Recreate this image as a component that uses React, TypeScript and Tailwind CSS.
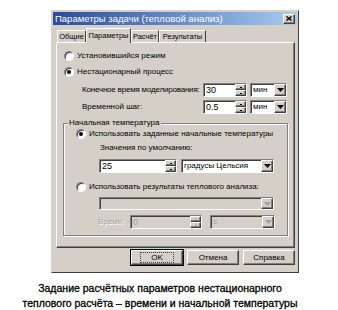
import type { ReactNode } from 'react';

const raised =
  'border border-t-white border-l-white border-r-[#404040] border-b-[#404040] shadow-[inset_-1px_-1px_0_#808080]';
const sunken =
  'border border-t-[#808080] border-l-[#808080] border-r-white border-b-white shadow-[inset_1px_1px_0_#404040]';

function Radio({ checked }: { checked?: boolean }) {
  return (
    <span className={`w-[10px] h-[10px] shrink-0 rounded-full bg-white flex items-center justify-center ${sunken}`}>
      {checked && <span className="w-[4px] h-[4px] rounded-full bg-black" />}
    </span>
  );
}

function Arrow({ disabled }: { disabled?: boolean }) {
  return (
    <svg width="7" height="4" viewBox="0 0 7 4">
      <path d="M0 0h7L3.5 4z" fill={disabled ? '#a0a0a0' : '#000'} />
    </svg>
  );
}

function Spin({ disabled }: { disabled?: boolean }) {
  const tone = disabled ? 'bg-[#a0a0a0]' : 'bg-black';
  return (
    <div className="flex flex-col w-[11px] h-full">
      <div className={`flex-1 bg-[#d4d0c8] flex items-center justify-center ${raised}`}>
        <span className={`w-[2px] h-[1px] ${tone}`} />
      </div>
      <div className={`flex-1 bg-[#d4d0c8] flex items-center justify-center ${raised}`}>
        <span className={`w-[2px] h-[1px] ${tone}`} />
      </div>
    </div>
  );
}

function SpinBox({ value, width, disabled }: { value: string; width: number; disabled?: boolean }) {
  return (
    <div className={`flex shrink-0 h-full ${sunken} ${disabled ? 'bg-[#d4d0c8]' : 'bg-white'}`} style={{ width }}>
      <span className={`flex-1 pl-[2px] leading-[12px] text-[9px] ${disabled ? 'text-[#a0a0a0]' : 'text-black'}`}>
        {value}
      </span>
      <Spin disabled={disabled} />
    </div>
  );
}

function Combo({ value, width, disabled }: { value: string; width: number; disabled?: boolean }) {
  return (
    <div className={`flex shrink-0 h-full ${sunken} ${disabled ? 'bg-[#d4d0c8]' : 'bg-white'}`} style={{ width }}>
      <span className={`flex-1 pl-[2px] leading-[11px] whitespace-nowrap ${disabled ? 'text-[#a0a0a0]' : 'text-black'}`}>
        {value}
      </span>
      <div className={`w-[12px] h-full bg-[#d4d0c8] flex items-center justify-center ${raised}`}>
        <Arrow disabled={disabled} />
      </div>
    </div>
  );
}

function Tab({ children, active, width }: { children: ReactNode; active?: boolean; width: number }) {
  return (
    <div
      className={`shrink-0 flex items-center justify-center whitespace-nowrap text-[7.5px] border-t border-l border-r border-t-white border-l-white border-r-[#404040] bg-[#d4d0c8] ${
        active ? 'h-[15px] -mb-px relative z-10' : 'h-[12px]'
      }`}
      style={{ width }}
    >
      {children}
    </div>
  );
}

function Button({ children, primary }: { children: ReactNode; primary?: boolean }) {
  return (
    <div
      className={`w-[52px] h-[15px] bg-[#d4d0c8] flex items-center justify-center ${raised} ${
        primary ? 'outline outline-1 outline-black' : ''
      }`}
    >
      <span className={primary ? 'px-[10px] border border-dotted border-[#404040] leading-[9px]' : ''}>{children}</span>
    </div>
  );
}

export default function App() {
  return (
    <div className="w-[338px] h-[310px] bg-white overflow-hidden font-['Liberation_Sans',Arial,sans-serif] text-[8px] text-black">
      <div className="ml-[51px] mt-[10px] w-[248px] h-[263px] bg-[#d4d0c8] border border-t-[#d4d0c8] border-l-[#d4d0c8] border-r-[#404040] border-b-[#404040] p-[1px] flex flex-col">
        {/* title bar */}
        <div className="h-[13px] bg-gradient-to-r from-[#2b4b9b] to-[#a8cbef] flex items-center justify-between pl-[2px] pr-[2px]">
          <span className="text-white text-[9.5px] leading-[12px]">Параметры задачи (тепловой анализ)</span>
          <div className={`w-[12px] h-[10px] bg-[#d4d0c8] flex items-center justify-center ${raised}`}>
            <svg width="6" height="5" viewBox="0 0 6 5">
              <path d="M0.5 0.5L5.5 4.5M5.5 0.5L0.5 4.5" stroke="#000" strokeWidth="1.4" />
            </svg>
          </div>
        </div>

        {/* tabs */}
        <div className="mt-[3px] ml-[4px] flex items-end">
          <Tab width={29}>Общие</Tab>
          <Tab width={45} active>
            Параметры
          </Tab>
          <Tab width={28}>Расчёт</Tab>
          <Tab width={47}>Результаты</Tab>
        </div>

        {/* panel */}
        <div className="ml-[3px] w-[239px] h-[206px] border border-t-white border-l-white border-r-[#404040] border-b-[#404040] shadow-[inset_-1px_-1px_0_#808080] flex flex-col whitespace-nowrap">
          <div className="mt-[7px] ml-[7px] h-[12px] flex items-center gap-[3px]">
            <Radio />
            <span>Установившийся режим</span>
          </div>
          <div className="mt-[4px] ml-[7px] h-[12px] flex items-center gap-[3px]">
            <Radio checked />
            <span>Нестационарный процесс</span>
          </div>
          <div className="mt-[5px] ml-[25px] h-[14px] flex items-center">
            <span className="w-[121px] tracking-[-0.2px]">Конечное время моделирования:</span>
            <SpinBox value="30" width={44} />
            <div className="ml-[3px] h-full">
              <Combo value="мин" width={37} />
            </div>
          </div>
          <div className="mt-[3px] ml-[25px] h-[14px] flex items-center">
            <span className="w-[121px]">Временной шаг:</span>
            <SpinBox value="0.5" width={44} />
            <div className="ml-[3px] h-full">
              <Combo value="мин" width={37} />
            </div>
          </div>

          {/* group box */}
          <div className="relative mt-[9px] ml-[6px] w-[225px] h-[113px] border border-[#808080] shadow-[inset_1px_1px_0_#fff,1px_1px_0_#fff] flex flex-col">
            <span className="absolute -top-[6px] left-[4px] px-[1px] bg-[#d4d0c8] leading-[10px]">Начальная температура</span>
            <div className="mt-[4px] ml-[12px] h-[12px] flex items-center gap-[3px]">
              <Radio checked />
              <span>Использовать заданные начальные температуры</span>
            </div>
            <div className="mt-[2px] ml-[36px] h-[12px] flex items-center">Значения по умолчанию:</div>
            <div className="mt-[5px] ml-[35px] h-[14px] flex">
              <SpinBox value="25" width={78} />
              <div className="ml-[4px] h-full">
                <Combo value="градусы Цельсия" width={93} />
              </div>
            </div>
            <div className="mt-[8px] ml-[12px] h-[12px] flex items-center gap-[3px]">
              <Radio />
              <span>Использовать результаты теплового анализа:</span>
            </div>
            <div className="mt-[4px] ml-[35px] h-[13px] flex">
              <Combo value="" width={175} disabled />
            </div>
            <div className="mt-[5px] ml-[34px] h-[14px] flex items-center">
              <span className="w-[32px] text-[#a0a0a0] [text-shadow:1px_1px_0_#fff]">Время:</span>
              <SpinBox value="0" width={72} disabled />
              <div className="ml-[8px] h-full">
                <Combo value="c" width={65} disabled />
              </div>
            </div>
          </div>
        </div>

        {/* buttons */}
        <div className="mt-[2px] flex justify-end gap-[4px] pr-[2px]">
          <Button primary>OK</Button>
          <Button>Отмена</Button>
          <Button>Справка</Button>
        </div>
      </div>

      <div className="mt-[8px] pr-[18px] text-center text-[10.5px] leading-[15px] [-webkit-text-stroke:0.3px_#000]">
        <div>Задание расчётных параметров нестационарного</div>
        <div>теплового расчёта – времени и начальной температуры</div>
      </div>
    </div>
  );
}
